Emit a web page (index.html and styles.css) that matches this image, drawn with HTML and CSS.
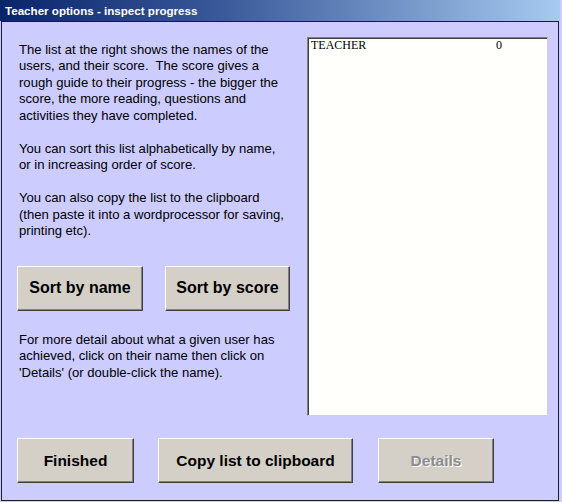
FILE: index.html
```html
<!DOCTYPE html>
<html>
<head>
<meta charset="utf-8">
<title>Teacher options - inspect progress</title>
<link rel="stylesheet" href="styles.css">
</head>
<body>
<div class="window">
  <div class="titlebar">Teacher options - inspect progress</div>
  <div class="frame">
    <div class="main">
      <div class="left">
        <p class="info">The list at the right shows the names of the<br>users, and their score.&nbsp; The score gives a<br>rough guide to their progress - the bigger the<br>score, the more reading, questions and<br>activities they have completed.</p>
        <p class="info">You can sort this list alphabetically by name,<br>or in increasing order of score.</p>
        <p class="info">You can also copy the list to the clipboard<br>(then paste it into a wordprocessor for saving,<br>printing etc).</p>
        <div class="sortrow">
          <button class="btn w-name">Sort by name</button>
          <button class="btn w-score">Sort by score</button>
        </div>
        <p class="info detail">For more detail about what a given user has<br>achieved, click on their name then click on<br>'Details' (or double-click the name).</p>
      </div>
      <div class="listbox">
        <div class="row"><span class="name">TEACHER</span><span class="score">0</span></div>
      </div>
    </div>
    <div class="bottomrow">
      <button class="btn w-fin">Finished</button>
      <button class="btn w-copy">Copy list to clipboard</button>
      <button class="btn w-det" disabled>Details</button>
    </div>
  </div>
</div>
</body>
</html>
```
FILE: styles.css
```css
html, body {
  margin: 0;
  padding: 0;
  background: #ccccff;
}
.window {
  width: 560px;
  height: 502px;
  display: flex;
  flex-direction: column;
}
.titlebar {
  height: 21px;
  line-height: 22px;
  padding-left: 5px;
  background: linear-gradient(to right, #0a246a 0%, #3a5a9a 40%, #a6caf0 100%);
  color: #fff;
  font-family: "Liberation Sans", Arial, sans-serif;
  font-weight: bold;
  font-size: 11.6px;
  box-sizing: border-box;
}
.frame {
  margin-left: 1px;
  width: 558px;
  height: 480px;
  box-sizing: border-box;
  border: 1px solid #1a1a30;
  padding: 15px 0 0 15px;
  display: flex;
  flex-direction: column;
}
.main {
  display: flex;
  gap: 16px;
  height: 379px;
}
.left {
  width: 274px;
  padding-top: 4.75px;
}
.info {
  margin: 0 0 16.5px 0;
  padding-left: 2px;
  font-family: "Liberation Sans", Arial, sans-serif;
  font-size: 13.1px;
  line-height: 16.5px;
  color: #000;
  white-space: nowrap;
}
.info.detail {
  margin-top: 21px;
}
.sortrow {
  display: flex;
  gap: 22px;
  margin-top: 26px;
}
.btn {
  height: 45px;
  box-sizing: border-box;
  background: #d4d0c8;
  border: 1px solid;
  border-color: #ffffff #404040 #404040 #ffffff;
  box-shadow: inset -1px -1px 0 #808080;
  font-family: "Liberation Sans", Arial, sans-serif;
  font-weight: bold;
  font-size: 15.5px;
  color: #000;
  padding: 0;
  margin: 0;
}
.sortrow .btn {
  font-size: 16px;
}
.btn:disabled {
  color: #8c8c8c;
  text-shadow: 1px 1px 0 #ffffff;
}
.w-name { width: 126px; }
.w-score { width: 125px; }
.w-fin { width: 117px; }
.w-copy { width: 195px; }
.w-det { width: 116px; margin-left: 1px; }
.listbox {
  width: 241px;
  height: 379px;
  box-sizing: border-box;
  background: #fffffb;
  border: 1px solid;
  border-color: #808080 #d4d0c8 #d4d0c8 #808080;
  box-shadow: inset 1px 1px 0 #404040, inset -1px -1px 0 #ffffff;
  padding: 0 3px;
}
.row {
  display: flex;
  font-family: "Liberation Serif", "Times New Roman", serif;
  font-size: 12px;
  line-height: 15px;
  color: #000;
}
.name {
  width: 185px;
}
.bottomrow {
  display: flex;
  gap: 24px;
  margin-top: 22px;
}
```
